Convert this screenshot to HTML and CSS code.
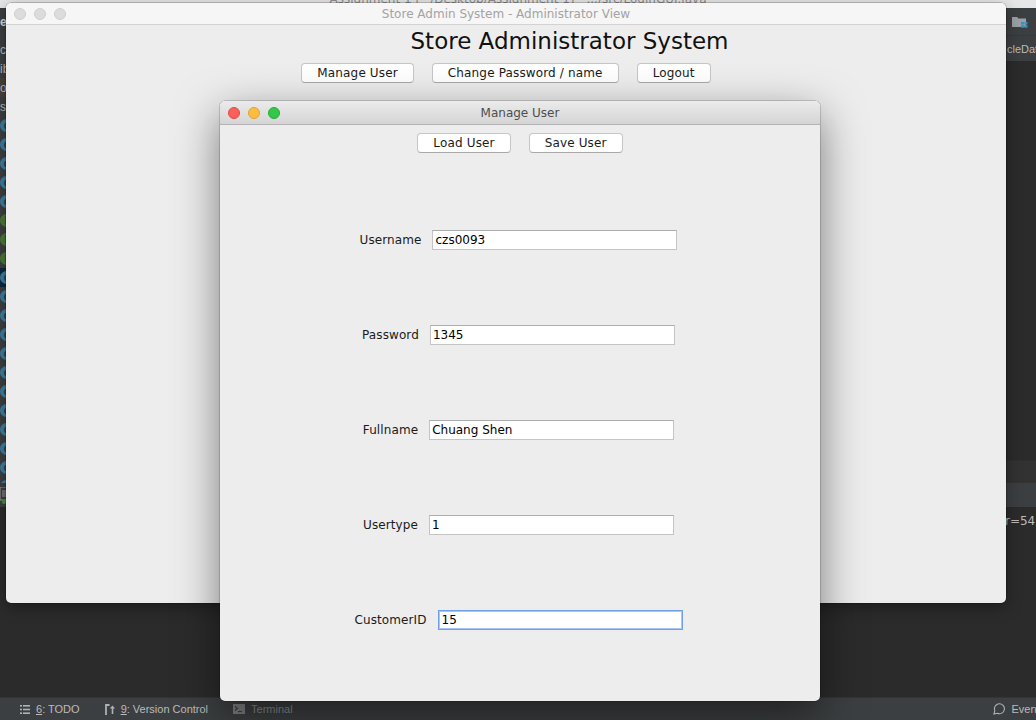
FILE: index.html
```html
<!DOCTYPE html>
<html>
<head>
<meta charset="utf-8">
<title>Store Admin System</title>
<link rel="stylesheet" href="styles.css">
</head>
<body>
<div class="desktop">
  <div class="ide">
    <div class="ide-title"><span class="ide-title-text">Assignment 1 [~/Desktop/Assignment 1] - .../src/LoginGUI.java</span></div>
    <div class="ide-top">
      <div class="ide-project">
        <div class="proj-head">e</div>
        <div class="proj-row">ct</div>
        <div class="proj-row">ib</div>
        <div class="proj-row proj-row-sel">o</div>
        <div class="proj-row">s</div>
        <div class="proj-row"><span class="cls">c</span></div>
        <div class="proj-row"><span class="cls">c</span></div>
        <div class="proj-row"><span class="cls">c</span></div>
        <div class="proj-row"><span class="cls">c</span></div>
        <div class="proj-row"><span class="cls">c</span></div>
        <div class="proj-row"><span class="cls cls-green">I</span></div>
        <div class="proj-row"><span class="cls cls-green">I</span></div>
        <div class="proj-row"><span class="cls cls-green">I</span></div>
        <div class="proj-row proj-row-active"><span class="cls">c</span></div>
        <div class="proj-row"><span class="cls">c</span></div>
        <div class="proj-row"><span class="cls">c</span></div>
        <div class="proj-row"><span class="cls">c</span></div>
        <div class="proj-row"><span class="cls">c</span></div>
        <div class="proj-row"><span class="cls">c</span></div>
        <div class="proj-row"><span class="cls">c</span></div>
        <div class="proj-row"><span class="cls">c</span></div>
        <div class="proj-row"><span class="cls">c</span></div>
        <div class="proj-row"><span class="cls">c</span></div>
        <div class="proj-row"><span class="cls">c</span></div>
        <div class="proj-row"><span class="cls">c</span></div>
      </div>
      <div class="ide-main">
        <div class="ide-toolbar">
          <svg class="folder-icon" width="16" height="12" viewBox="0 0 16 12">
            <path d="M0 1 H5 L6.5 2.5 H14 V11 H0 Z" fill="#9ba0a4"/>
            <rect x="9" y="6" width="3" height="2.5" fill="#3592c4"/>
            <rect x="12.5" y="6" width="3" height="2.5" fill="#3592c4"/>
            <rect x="9" y="9.2" width="3" height="2.5" fill="#3592c4"/>
            <rect x="12.5" y="9.2" width="3" height="2.5" fill="#3592c4"/>
          </svg>
        </div>
        <div class="ide-tabs">cleData.java</div>
        <div class="ide-editor"></div>
        <div class="ide-crumbs"></div>
      </div>
    </div>
    <div class="ide-toolhead">
      <svg class="run-icon" width="12" height="17" viewBox="0 0 12 17">
        <rect x="0" y="0" width="11" height="13" fill="none" stroke="#8c8c8c" stroke-width="1.2"/>
        <rect x="2" y="3" width="7" height="7" fill="#6e6e6e"/>
        <circle cx="4" cy="15" r="2" fill="#3a9a3a"/>
      </svg>
    </div>
    <div class="ide-console"><span class="console-line">r=542</span></div>
    <div class="ide-status">
      <div class="sb-item">
        <svg width="10" height="9" viewBox="0 0 10 9">
          <rect x="0" y="0" width="2" height="1.6" fill="#afb1b3"/>
          <rect x="3" y="0" width="7" height="1.6" fill="#afb1b3"/>
          <rect x="0" y="3.7" width="2" height="1.6" fill="#afb1b3"/>
          <rect x="3" y="3.7" width="7" height="1.6" fill="#afb1b3"/>
          <rect x="0" y="7.4" width="2" height="1.6" fill="#afb1b3"/>
          <rect x="3" y="7.4" width="7" height="1.6" fill="#afb1b3"/>
        </svg>
        <span><u>6</u>: TODO</span>
      </div>
      <div class="sb-item">
        <svg width="10" height="11" viewBox="0 0 10 11">
          <path d="M1 11 V1 H4.5" fill="none" stroke="#afb1b3" stroke-width="1.8"/>
          <path d="M7.5 10 V3" fill="none" stroke="#afb1b3" stroke-width="1.6"/>
          <path d="M4.8 4.6 L7.5 1.6 L10.2 4.6 Z" fill="#afb1b3"/>
        </svg>
        <span><u>9</u>: Version Control</span>
      </div>
      <div class="sb-item sb-dim">
        <svg width="12" height="10" viewBox="0 0 12 10">
          <rect x="0" y="0" width="12" height="10" fill="#7d7f81"/>
          <path d="M2 2.5 L4.5 4.5 L2 6.5" fill="none" stroke="#3c3f41" stroke-width="1.1"/>
          <rect x="5" y="7" width="4" height="1.1" fill="#3c3f41"/>
        </svg>
        <span>Terminal</span>
      </div>
      <div class="sb-spacer"></div>
      <div class="sb-item sb-event">
        <svg width="12" height="12" viewBox="0 0 12 12">
          <path d="M1 11 L1.8 7.6 A5 5 0 1 1 4.4 10.3 Z" fill="none" stroke="#afb1b3" stroke-width="1.1"/>
        </svg>
        <span>Event Log</span>
      </div>
    </div>
  </div>

  <div class="window win-main">
    <div class="titlebar titlebar-inactive">
      <div class="lights">
        <span class="light light-off"></span>
        <span class="light light-off"></span>
        <span class="light light-off"></span>
      </div>
      <div class="title-text">Store Admin System - Administrator View</div>
      <div></div>
    </div>
    <div class="main-content">
      <h1 class="app-heading">Store Administrator System</h1>
      <div class="button-row">
        <button class="btn">Manage User</button>
        <button class="btn">Change Password / name</button>
        <button class="btn">Logout</button>
      </div>
    </div>
  </div>

  <div class="window win-dialog">
    <div class="titlebar titlebar-active">
      <div class="lights">
        <span class="light light-close"></span>
        <span class="light light-min"></span>
        <span class="light light-max"></span>
      </div>
      <div class="title-text">Manage User</div>
      <div></div>
    </div>
    <div class="dialog-content">
      <div class="button-row">
        <button class="btn">Load User</button>
        <button class="btn">Save User</button>
      </div>
      <div class="fields">
        <div class="field">
          <label class="field-label">Username</label>
          <input class="text-field" type="text" value="czs0093" readonly>
        </div>
        <div class="field">
          <label class="field-label">Password</label>
          <input class="text-field" type="text" value="1345" readonly>
        </div>
        <div class="field">
          <label class="field-label">Fullname</label>
          <input class="text-field" type="text" value="Chuang Shen" readonly>
        </div>
        <div class="field">
          <label class="field-label">Usertype</label>
          <input class="text-field" type="text" value="1" readonly>
        </div>
        <div class="field">
          <label class="field-label">CustomerID</label>
          <input class="text-field text-field-focus" type="text" value="15" readonly>
        </div>
      </div>
    </div>
  </div>
</div>
</body>
</html>
```

FILE: styles.css
```css
* { box-sizing: border-box; }

html, body {
  margin: 0;
  padding: 0;
}

body {
  width: 1036px;
  height: 720px;
  overflow: hidden;
  background: #2b2b2b;
  font-family: "DejaVu Sans", sans-serif;
}

.desktop {
  position: relative;
  width: 1036px;
  height: 720px;
  overflow: hidden;
}

/* ---------- IDE background ---------- */
.ide {
  position: absolute;
  inset: 0;
  display: flex;
  flex-direction: column;
}

.ide-title {
  height: 8px;
  flex: none;
  background: #e7e7e7;
  text-align: center;
  font-size: 12px;
  line-height: 14px;
  color: #8e8e8e;
  overflow: hidden;
  white-space: nowrap;
}

.ide-title-text {
  display: block;
  margin-top: -8px;
}

.ide-top {
  height: 475px;
  flex: none;
  display: flex;
}

.ide-project {
  width: 200px;
  flex: none;
  background: #3c3f41;
  display: flex;
  flex-direction: column;
  overflow: hidden;
  font-family: "Liberation Sans", sans-serif;
  font-size: 12px;
  color: #bbbbbb;
}

.proj-head {
  height: 32px;
  flex: none;
  line-height: 28px;
  font-weight: bold;
  color: #d6d6d6;
}

.proj-row {
  height: 19px;
  flex: none;
  display: flex;
  align-items: center;
}

.proj-row-sel { background: #48423a; }
.proj-row-active { background: #0d293e; }

.cls {
  width: 13px;
  height: 13px;
  border-radius: 50%;
  background: #3c7ea2;
  color: #1d3a4a;
  font-size: 10px;
  font-weight: bold;
  display: flex;
  align-items: center;
  justify-content: center;
}

.cls-green { background: #4b7a34; color: #203a14; }

.ide-main {
  flex: 1;
  display: flex;
  flex-direction: column;
}

.ide-toolbar {
  height: 28px;
  flex: none;
  background: #3c3f41;
  border-bottom: 1px solid #353739;
  display: flex;
  align-items: center;
  padding-left: 812px;
}

.ide-tabs {
  height: 26px;
  flex: none;
  background: #3c3f41;
  border-bottom: 1px solid #2b2b2b;
  padding-left: 807px;
  font-family: "Liberation Sans", sans-serif;
  font-size: 11px;
  line-height: 26px;
  color: #bbbbbb;
  white-space: nowrap;
}

.ide-editor {
  flex: 1;
  background: #2b2b2b;
}

.ide-crumbs {
  height: 23px;
  flex: none;
  background: #323232;
  border-top: 1px solid #2f2f2f;
}

.ide-toolhead {
  height: 24px;
  flex: none;
  background: #3c3f41;
  display: flex;
  align-items: center;
  padding-left: 0;
}

.ide-console {
  flex: 1;
  background: #2b2b2b;
  padding-top: 6px;
  padding-left: 1005px;
  font-family: "DejaVu Sans", sans-serif;
  font-size: 12px;
  line-height: 16px;
  color: #bbbbbb;
  white-space: nowrap;
}

.ide-status {
  height: 23px;
  flex: none;
  background: #3c3f41;
  border-top: 1px solid #323436;
  display: flex;
  align-items: center;
  padding-left: 20px;
  gap: 25px;
  font-family: "Liberation Sans", sans-serif;
  font-size: 11px;
  color: #bbbbbb;
  white-space: nowrap;
}

.sb-item {
  display: flex;
  align-items: center;
  gap: 6px;
}

.sb-item svg { flex: none; }
.sb-dim { color: #8d8d8d; }
.sb-spacer { flex: 1; }
.sb-event { margin-right: -25px; }

/* ---------- macOS windows ---------- */
.window {
  position: absolute;
  background: #ededed;
  border-radius: 5px;
  overflow: hidden;
  display: flex;
  flex-direction: column;
}

.win-main {
  left: 6px;
  top: 3px;
  width: 1000px;
  height: 600px;
  box-shadow: 0 0 0 0.5px rgba(0, 0, 0, 0.35), 0 4px 16px rgba(0, 0, 0, 0.35);
}

.win-dialog {
  left: 220px;
  top: 101px;
  width: 600px;
  height: 600px;
  box-shadow: 0 0 0 0.5px rgba(0, 0, 0, 0.3), 0 14px 44px rgba(0, 0, 0, 0.5);
}

.titlebar {
  flex: none;
  display: grid;
  grid-template-columns: 1fr auto 1fr;
  align-items: center;
  font-size: 12px;
}

.titlebar-inactive {
  height: 22px;
  background: #f6f6f6;
  border-bottom: 1px solid #d3d3d3;
  color: #a3a3a3;
}

.titlebar-active {
  height: 24px;
  background: linear-gradient(#ebebeb, #d5d5d5);
  border-bottom: 1px solid #b4b4b4;
  color: #4d4d4d;
}

.titlebar-active .title-text {
  padding-top: 1px;
}

.lights {
  display: flex;
  gap: 8px;
  padding-left: 8px;
}

.light {
  width: 12px;
  height: 12px;
  border-radius: 50%;
}

.light-off { background: #dcdcdc; border: 0.5px solid #cfcfcf; }
.light-close { background: #fc605b; border: 0.5px solid #de4a44; }
.light-min { background: #fdbc40; border: 0.5px solid #dea236; }
.light-max { background: #34c84a; border: 0.5px solid #27aa35; }

.title-text {
  white-space: nowrap;
}

/* ---------- main window content ---------- */
.main-content {
  display: flex;
  flex-direction: column;
  align-items: center;
}

.app-heading {
  margin: 3px 0 0 0;
  padding-left: 127px;
  font-size: 23px;
  font-weight: normal;
  line-height: normal;
  color: #111111;
  white-space: nowrap;
}

.button-row {
  display: flex;
  justify-content: center;
  gap: 18px;
  margin-top: 9px;
}

.btn {
  height: 20px;
  padding: 0 15px;
  background: #ffffff;
  border: 1px solid #c6c6c6;
  border-bottom-color: #a9a9a9;
  border-radius: 4px;
  font-family: "DejaVu Sans", sans-serif;
  font-size: 12px;
  line-height: 18px;
  letter-spacing: 0.15px;
  color: #1a1a1a;
  white-space: nowrap;
}

/* ---------- dialog content ---------- */
.dialog-content {
  display: flex;
  flex-direction: column;
  align-items: center;
}

.dialog-content .button-row {
  margin-top: 8px;
}

.fields {
  margin-top: 77px;
  padding-right: 3px;
  display: flex;
  flex-direction: column;
  align-items: center;
  gap: 75px;
}

.field {
  display: flex;
  align-items: center;
  gap: 11px;
}

.field-label {
  font-size: 12px;
  letter-spacing: 0.1px;
  color: #1a1a1a;
  white-space: nowrap;
}

.text-field {
  width: 245px;
  height: 20px;
  margin: 0;
  padding: 0 2px;
  background: #ffffff;
  border: 1px solid #c4c4c4;
  border-top-color: #adadad;
  border-radius: 0;
  font-family: "DejaVu Sans", sans-serif;
  font-size: 12px;
  color: #000000;
  outline: none;
}

.text-field-focus {
  border: 1px solid #6f9fe6;
  box-shadow: inset 0 0 0 1px #a7c6f4;
  padding-left: 3px;
}
```
